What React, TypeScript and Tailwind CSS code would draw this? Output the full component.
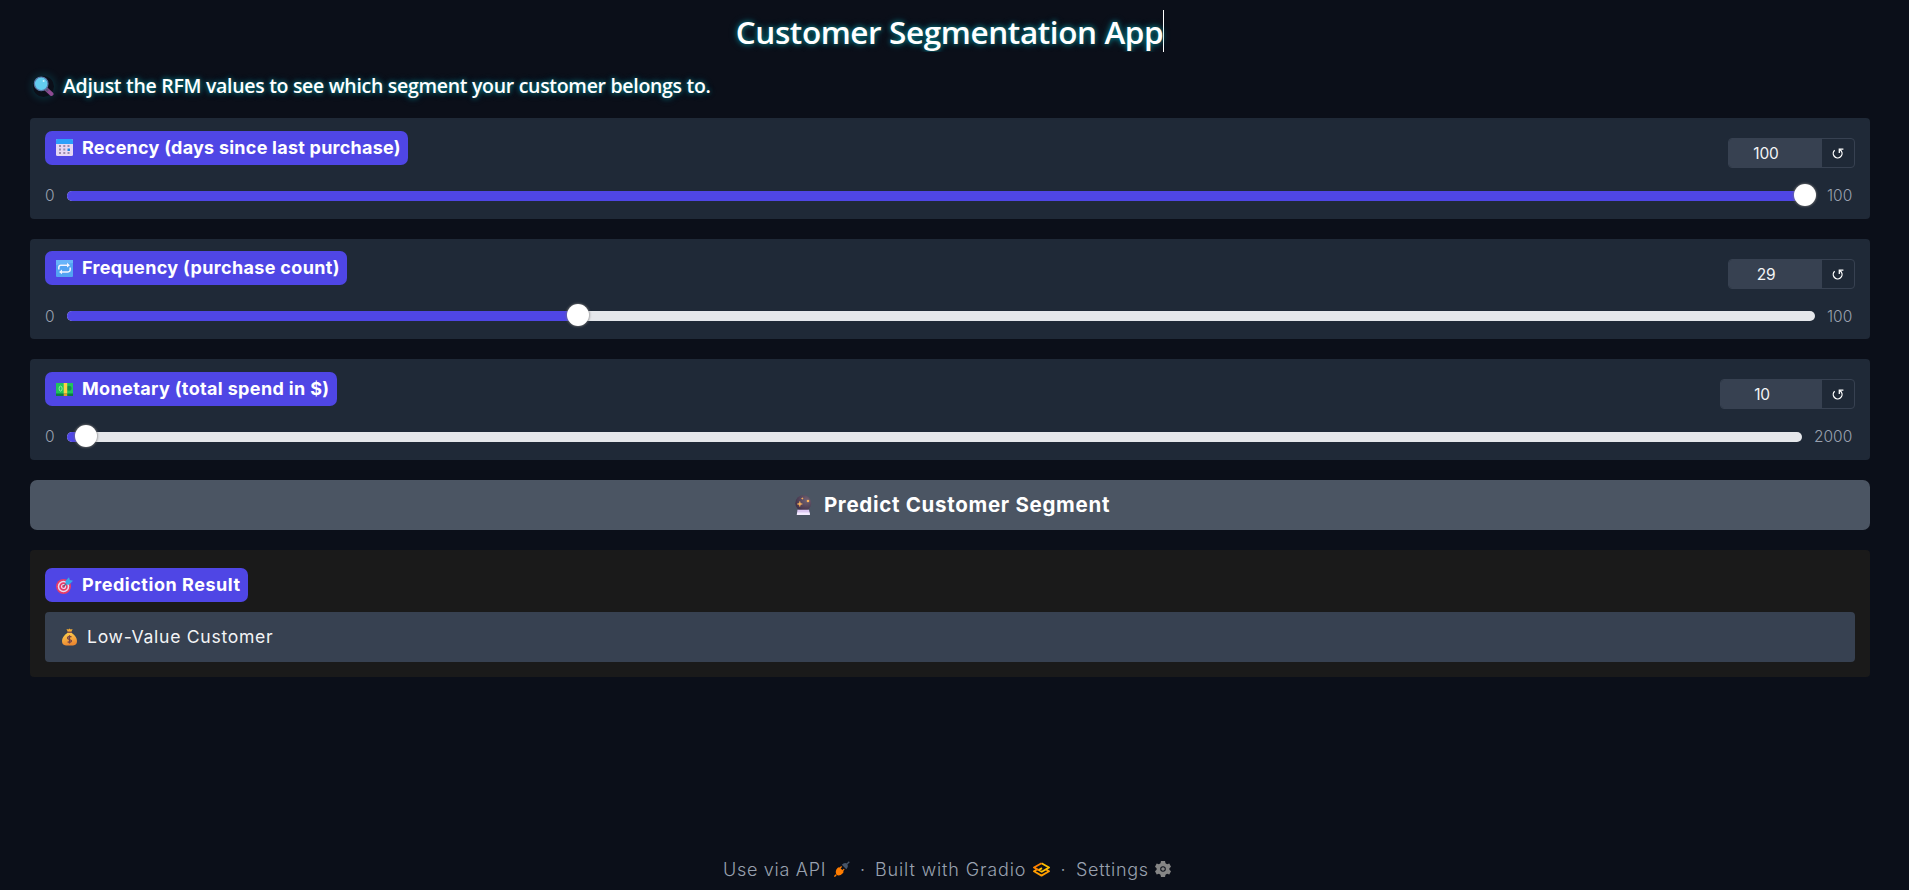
import type { ReactNode } from 'react';

const emoji = 'block shrink-0';

function Magnifier() {
  return (
    <svg className={emoji} width="21" height="21" viewBox="0 0 21 21">
      <path d="M13 13 L18.5 18" stroke="#8d4a92" strokeWidth="4" strokeLinecap="round" />
      <path d="M12 12 L15 15" stroke="#5b5574" strokeWidth="2.5" />
      <circle cx="8.2" cy="7.8" r="6.8" fill="#63cdf0" stroke="#5a78a8" strokeWidth="1.2" />
      <circle cx="10.6" cy="5" r="1" fill="#c9f3ff" />
    </svg>
  );
}

function Calendar() {
  return (
    <svg className={emoji} width="17" height="17" viewBox="0 0 17 17">
      <rect width="17" height="17" rx="1.5" fill="#e6d8f4" />
      <path d="M0 5V1.5Q0 0 1.5 0H15.5Q17 0 17 1.5V5Z" fill="#2ba0fb" />
      <g fill="#9b8bad">
        <rect x="3" y="6" width="2" height="2" /><rect x="7.3" y="6" width="2" height="2" /><rect x="11.5" y="6" width="2" height="2" />
        <rect x="3" y="9.5" width="2" height="2" /><rect x="7.3" y="9.5" width="2" height="2" />
        <rect x="3" y="13" width="2" height="2" /><rect x="7.3" y="13" width="2" height="2" /><rect x="11.5" y="13" width="2" height="2" />
      </g>
      <rect x="11.5" y="9.5" width="2.5" height="2.5" fill="#1c86e8" />
    </svg>
  );
}

function Repeat() {
  return (
    <svg className={emoji} width="17" height="17" viewBox="0 0 17 17">
      <rect width="17" height="17" rx="1" fill="#53a4f3" />
      <path d="M0 0H17V3L0 5Z" fill="#68b4fa" />
      <g fill="none" stroke="#f2f4ff" strokeWidth="1.5">
        <path d="M2.8 9.5V7.4Q2.8 5.2 5 5.2H12.5" />
        <path d="M14.2 7.5V9.6Q14.2 11.9 12 11.9H4.5" />
      </g>
      <path d="M11 2.8L14 5.2L11 7.5ZM6 9.5L3 11.9L6 14.3Z" fill="#f2f4ff" />
    </svg>
  );
}

function Cash() {
  return (
    <svg className={emoji} width="17" height="17" viewBox="0 0 17 17">
      <rect y="3" width="17" height="13" fill="#0b7d43" />
      <rect y="3" width="17" height="10.5" fill="#20c45c" />
      <circle cx="13" cy="8.2" r="2.5" fill="#15924a" />
      <ellipse cx="4.6" cy="8.6" rx="1.5" ry="2.5" fill="none" stroke="#b5f0b1" strokeWidth=".8" />
      <rect x="7.7" y="3" width="3.5" height="10.5" fill="#ffd145" />
      <rect x="7.7" y="13.5" width="3.5" height="2.5" fill="#e59a2a" />
    </svg>
  );
}

function CrystalBall() {
  return (
    <svg className={emoji} width="17" height="20" viewBox="0 0 17 20">
      <defs>
        <radialGradient id="ball" cx=".7" cy=".3" r=".8">
          <stop stopColor="#716273" /><stop offset="1" stopColor="#3d2c45" />
        </radialGradient>
      </defs>
      <circle cx="8.3" cy="8.2" r="8" fill="url(#ball)" />
      <path d="M2.5 14.8H14L15 19.8H1.8Z" fill="#dcc8f2" />
      <path d="M2.2 17.6H14.6L15 20H1.8Z" fill="#f4ebff" />
      <path d="M4.8 6.2L5.5 8.3L7.6 9L5.5 9.7L4.8 11.8L4.1 9.7L2 9L4.1 8.3Z" fill="#ffb35a" stroke="#ffb35a" strokeWidth=".3" />
      <path d="M7.3 2.2L7.7 3.1L8.6 3.5L7.7 3.9L7.3 4.8L6.9 3.9L6 3.5L6.9 3.1Z" fill="#ffaf57" />
      <circle cx="13" cy="6" r="1.3" fill="#ffb35a" />
    </svg>
  );
}

function Target() {
  return (
    <svg className={emoji} width="17" height="17" viewBox="0 0 17 17">
      <circle cx="7.5" cy="9.5" r="7.5" fill="#e93c67" />
      <circle cx="7.5" cy="9.5" r="5" fill="none" stroke="#e7d9f1" strokeWidth="1.5" />
      <circle cx="7.5" cy="9.5" r="2" fill="none" stroke="#e7d9f1" strokeWidth="1.2" />
      <path d="M7.5 9.5L13 4" stroke="#54617e" strokeWidth="1.2" />
      <path d="M9.5 4L13 .3L13.8 3L17 3.8L13 7.8L9.6 7.4Z" fill="#37a9e8" />
    </svg>
  );
}

function MoneyBag() {
  return (
    <svg className={emoji} width="15" height="18" viewBox="0 0 15 18">
      <defs>
        <linearGradient id="bag" x2=".3" y2="1">
          <stop stopColor="#ffd24e" /><stop offset="1" stopColor="#ed8a32" />
        </linearGradient>
      </defs>
      <path d="M4.5 1L6.5 1.6L7.5 .4L8.7 1.6L10.6 1L9.3 4H5.8Z" fill="#f4ac35" />
      <path d="M5.3 5C2 7 0 10 0 13Q0 17.4 4 17.4H11Q15 17.4 15 13C15 10 13 7 9.8 5Z" fill="url(#bag)" />
      <rect x="5" y="3.5" width="5" height="1.6" rx=".8" fill="#8a5145" />
      <path d="M9.5 9Q7.5 7.6 6 9T7.5 11.5T9 13.8T5.6 13.8M7.5 7.3V15.5" fill="none" stroke="#744347" strokeWidth="1.2" />
    </svg>
  );
}

function Plug() {
  return (
    <svg className={emoji} width="16" height="16" viewBox="0 0 16 16">
      <path d="M13 3L15.3 .8" stroke="#475569" strokeWidth="1.3" />
      <path d="M7.8 3.8Q10.3 1 13 2.5Q15 5.5 12.3 8.2Z" fill="#475569" />
      <path d="M2.2 13.8L.4 15.6" stroke="#ff7c00" strokeWidth="1.4" />
      <path d="M3.5 7Q5 5.8 6 6.8L9.3 10Q10 11.2 8.8 12.2Q5.5 15.6 2.5 13.7Q.6 10.2 3.5 7Z" fill="#ff7c00" />
      <path d="M5.7 7.4L7.6 5.5M8.3 10L10.2 8.1" stroke="#ff7c00" strokeWidth="1.3" />
    </svg>
  );
}

function GradioLogo() {
  return (
    <svg className={emoji} width="17" height="15" viewBox="0 0 17 15">
      <g fill="none" strokeWidth="1.9" strokeLinejoin="round">
        <path d="M4.3 7.2L1 9.2L8.5 13.6L16 9.2L12.7 7.2" stroke="#ff9c00" />
        <path d="M8.5 1.2L16 5.5L8.8 9.8L5.8 8L9 6.1" stroke="#ffc000" />
        <path d="M8.5 1.2L1 5.5L5.8 8.2" stroke="#ff8200" />
      </g>
    </svg>
  );
}

function Gear() {
  return (
    <svg className={emoji} width="16" height="16" viewBox="0 0 16 16">
      <path
        fill="#858585"
        fillRule="evenodd"
        d="M6 0H10L10.5 2.3L12.1 3.2L14.3 2.4L16 5.8L14.4 7.2V8.8L16 10.2L14.3 13.6L12.1 12.8L10.5 13.7L10 16H6L5.5 13.7L3.9 12.8L1.7 13.6L0 10.2L1.6 8.8V7.2L0 5.8L1.7 2.4L3.9 3.2L5.5 2.3ZM8 5.2A2.8 2.8 0 1 0 8 10.8A2.8 2.8 0 1 0 8 5.2Z"
      />
      <circle cx="8" cy="8" r="1.8" fill="#858585" />
    </svg>
  );
}

function ResetIcon() {
  return (
    <svg width="12" height="12" viewBox="0 0 12 12" fill="none" stroke="#ffffff" strokeWidth="1.3">
      <path d="M2.7 2.2A4.4 4.4 0 1 0 9.3 3L7.8 1.6" />
      <path d="M11.4 1.1H7.3V5" />
    </svg>
  );
}

function Chip({ icon, children, tracking }: { icon: ReactNode; children: ReactNode; tracking: string }) {
  return (
    <div className="flex h-[34px] w-fit items-center gap-[9px] rounded-[7px] bg-[#4f46e5] pr-[7.5px] pl-[11px]">
      {icon}
      <span className={`whitespace-nowrap text-[18px] leading-none font-bold text-white ${tracking}`}>{children}</span>
    </div>
  );
}

type SliderProps = {
  icon: ReactNode;
  label: string;
  tracking: string;
  value: number;
  max: number;
  fill: number;
  boxWidth: string;
  maxWidth: string;
};

function SliderCard({ icon, label, tracking, value, max, fill, boxWidth, maxWidth }: SliderProps) {
  return (
    <section className="h-[100.5px] rounded-[4px] bg-[#1f2937] px-[15px] pt-[12.9px]">
      <div className="flex h-[43px] items-start justify-between">
        <Chip icon={icon} tracking={tracking}>{label}</Chip>
        <div className={`mt-[7.2px] flex h-[30px] overflow-hidden rounded-[4px] border border-[#374151] ${boxWidth}`}>
          <div className="flex flex-1 items-center justify-center bg-[#374151] pt-[2px] pr-[19px] text-[15.5px] text-gray-100">
            <span className="tracking-[-0.2px]">{value}</span>
          </div>
          <button className="flex w-8 items-center justify-center pt-[2px]"><ResetIcon /></button>
        </div>
      </div>
      <div className="mt-[12px] flex h-[20px] items-center text-[15.5px] text-gray-400">
        <span className="w-[22px] font-light">0</span>
        <div className="relative h-[10px] flex-1 rounded-full bg-[#e5e7eb]">
          <div className="h-full rounded-full bg-[#4f46e5]" style={{ width: `${fill}px` }} />
          <div
            className="absolute top-[-7px] size-[22px] rounded-full bg-white shadow-[0_0_2px_1px_rgba(120,120,120,0.6)]"
            style={{ left: `${fill - 11}px` }}
          />
        </div>
        <span className={`pl-[12px] font-light tracking-[0px] ${maxWidth}`}>{max}</span>
      </div>
    </section>
  );
}

const glow = '[text-shadow:0_0_5px_rgba(0,210,220,0.6),0_0_10px_rgba(0,190,210,0.3)]';

export default function App() {
  return (
    <div className="flex h-[890px] w-[1909px] flex-col overflow-hidden bg-[#0b0f19] pr-[39px] pl-[30px] font-[Inter,sans-serif]">
      <header className="flex h-[52px] items-start justify-center overflow-hidden pt-[10px]">
        <h1 className={`h-[42px] whitespace-nowrap border-r border-white font-['Open_Sans',sans-serif] text-[31.5px] leading-[44px] font-semibold tracking-[-0.4px] text-white ${glow}`}>
          Customer Segmentation App
        </h1>
      </header>
      <div className="mt-[20px] flex h-[28px] items-center gap-[9px] pl-[3px]">
        <div className="rounded-full shadow-[0_0_8px_1px_rgba(0,190,210,0.22)]"><Magnifier /></div>
        <p className={`whitespace-nowrap font-['Open_Sans',sans-serif] text-[19.5px] leading-7 font-semibold tracking-[-0.3px] text-white ${glow}`}>
          Adjust the RFM values to see which segment your customer belongs to.
        </p>
      </div>
      <main className="mt-[18px] flex flex-col">
        <div className="flex flex-col gap-[20px]">
          <SliderCard icon={<Calendar />} label="Recency (days since last purchase)" tracking="tracking-[0.24px]" value={100} max={100} fill={1738} boxWidth="w-[127px]" maxWidth="w-[40px]" />
          <SliderCard icon={<Repeat />} label="Frequency (purchase count)" tracking="tracking-[0.34px]" value={29} max={100} fill={511} boxWidth="w-[127px]" maxWidth="w-[40px]" />
          <SliderCard icon={<Cash />} label="Monetary (total spend in $)" tracking="tracking-[0.35px]" value={10} max={2000} fill={19} boxWidth="w-[135px]" maxWidth="w-[53px]" />
        </div>
        <button className="mt-[20.5px] flex h-[50px] items-center justify-center gap-[12px] rounded-[7px] bg-[#4b5563] pl-[5px] text-[20.5px] font-bold text-white">
          <CrystalBall />
          <span className="whitespace-nowrap pt-px tracking-[0.7px]">Predict Customer Segment</span>
        </button>
        <section className="mt-[20px] h-[127px] rounded-[4px] bg-[#1a1a1a] px-[15px] pt-[18px]">
          <Chip icon={<Target />} tracking="tracking-[0.54px]">Prediction Result</Chip>
          <div className="mt-[10px] flex h-[50px] items-center gap-[10px] rounded-[4px] bg-[#374151] pl-[17px] text-[17.6px] text-gray-100">
            <MoneyBag />
            <span className="whitespace-nowrap pt-px tracking-[0.7px]">Low-Value Customer</span>
          </div>
        </section>
      </main>
      <footer className="mt-auto mb-[9px] flex h-[24px] items-center pl-[693px] text-[18px] font-light whitespace-nowrap text-gray-400">
        <span className="w-[111px] tracking-[0.71px]">Use via API</span>
        <Plug />
        <span className="w-[25px] text-center">·</span>
        <span className="w-[158px] tracking-[0.85px]">Built with Gradio</span>
        <GradioLogo />
        <span className="w-[26px] text-center">·</span>
        <span className="w-[79px] tracking-[0.72px]">Settings</span>
        <Gear />
      </footer>
    </div>
  );
}
